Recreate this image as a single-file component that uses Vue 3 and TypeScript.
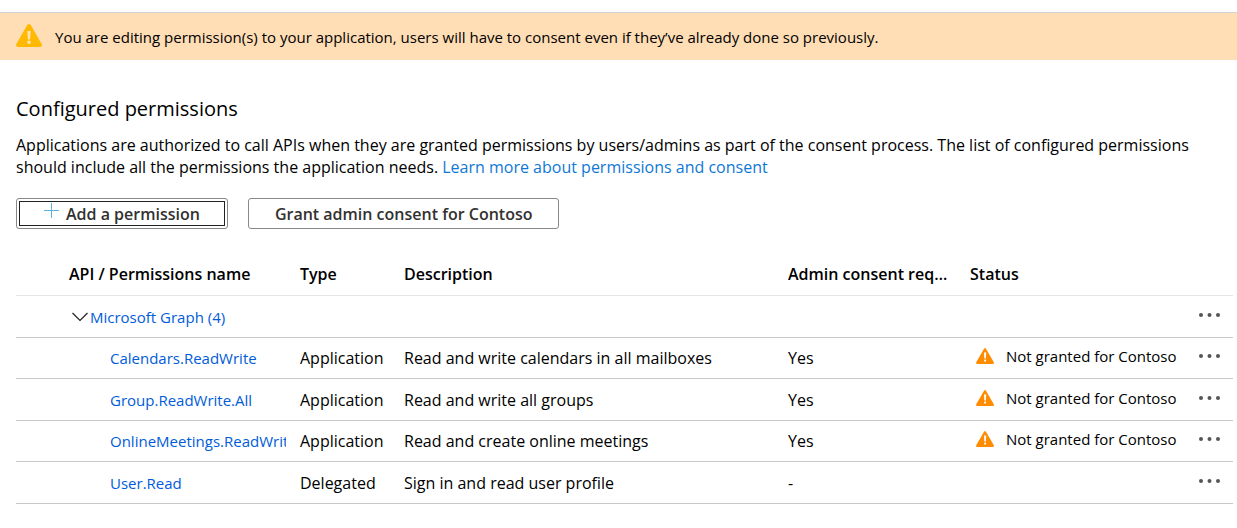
<script setup lang="ts">
interface Permission {
  name: string
  type: 'Application' | 'Delegated'
  description: string
  consent: string
  status?: string
}

const permissions: Permission[] = [
  { name: 'Calendars.ReadWrite', type: 'Application', description: 'Read and write calendars in all mailboxes', consent: 'Yes', status: 'Not granted for Contoso' },
  { name: 'Group.ReadWrite.All', type: 'Application', description: 'Read and write all groups', consent: 'Yes', status: 'Not granted for Contoso' },
  { name: 'OnlineMeetings.ReadWrite.All', type: 'Application', description: 'Read and create online meetings', consent: 'Yes', status: 'Not granted for Contoso' },
  { name: 'User.Read', type: 'Delegated', description: 'Sign in and read user profile', consent: '-' },
]
</script>

<template>
  <main class="page">
    <div class="banner" role="status">
      <svg class="banner-icon" viewBox="0 0 26 23" aria-hidden="true">
        <path d="M11.2 1.100Q13-1 14.800 1.100L25.600 20Q26.600 22.700 23.800 23H2.200Q-.6 22.700.4 20Z" fill="#ffb900" />
        <path d="M11.300 7h3.400l-.6 8.400h-2.200Z" fill="#ffe3b0" />
        <circle cx="13" cy="18.200" r="1.800" fill="#ffe3b0" />
      </svg>
      <span>You are editing permission(s) to your application, users will have to consent even if they’ve already done so previously.</span>
    </div>

    <section class="content">
      <h1>Configured permissions</h1>
      <p>
        Applications are authorized to call APIs when they are granted permissions by users/admins as part of the consent process. The list of configured permissions should include all the permissions the application needs.
        <a href="#">Learn more about permissions and consent</a>
      </p>

      <div class="actions">
        <button type="button" class="button add">
          <svg class="plus" viewBox="0 0 16 16" aria-hidden="true">
            <path d="M7.5 0v15M0 7.5h15" fill="none" stroke="#59b4d9" />
          </svg>
          Add a permission
        </button>
        <button type="button" class="button grant">Grant admin consent for Contoso</button>
      </div>

      <table>
        <colgroup>
          <col class="col-name" />
          <col class="col-type" />
          <col />
          <col class="col-consent" />
          <col class="col-status" />
          <col class="col-menu" />
        </colgroup>
        <thead>
          <tr>
            <th scope="col" class="name-head">API / Permissions name</th>
            <th scope="col">Type</th>
            <th scope="col">Description</th>
            <th scope="col"><div class="ellipsis">Admin consent required</div></th>
            <th scope="col">Status</th>
            <td></td>
          </tr>
        </thead>
        <tbody>
          <tr>
            <td colspan="5">
              <div class="group">
                <button type="button" class="toggle" aria-label="Collapse Microsoft Graph" aria-expanded="true">
                  <svg viewBox="0 0 16 10" aria-hidden="true">
                    <path d="M.5 1 8 8.500 15.500 1" fill="none" stroke="#222" stroke-width="1.200" />
                  </svg>
                </button>
                <a href="#">Microsoft Graph (4)</a>
              </div>
            </td>
            <td class="raised">
              <button type="button" class="more" aria-label="More actions for Microsoft Graph">
                <svg viewBox="0 0 22 4" aria-hidden="true"><circle cx="2" cy="2" r="2" /><circle cx="10.500" cy="2" r="2" /><circle cx="19" cy="2" r="2" /></svg>
              </button>
            </td>
          </tr>
          <tr v-for="p in permissions" :key="p.name">
            <td><div class="permission"><a href="#">{{ p.name }}</a></div></td>
            <td>{{ p.type }}</td>
            <td>{{ p.description }}</td>
            <td>{{ p.consent }}</td>
            <td class="raised">
              <div v-if="p.status" class="status">
                <svg viewBox="0 0 18 16" aria-hidden="true">
                  <path d="M8 .8Q9-.6 10 .8L17.800 14.200Q18.300 15.800 16.800 16H1.200Q-.3 15.800.2 14.200Z" fill="#ff8c00" />
                  <path d="M8 4.500h2.200l-.3 6H8.300Z" fill="#fff" />
                  <circle cx="9.100" cy="12.600" r="1.100" fill="#fff" />
                </svg>
                <span>{{ p.status }}</span>
              </div>
            </td>
            <td class="raised">
              <button type="button" class="more" :aria-label="`More actions for ${p.name}`">
                <svg viewBox="0 0 22 4" aria-hidden="true"><circle cx="2" cy="2" r="2" /><circle cx="10.500" cy="2" r="2" /><circle cx="19" cy="2" r="2" /></svg>
              </button>
            </td>
          </tr>
        </tbody>
      </table>
    </section>
  </main>
</template>

<style>
body {
  margin: 0;
  background: #fff;
}
</style>

<style scoped>
.page {
  padding-top: 12px;
  color: #000;
  font: 16px/22px "Segoe UI", "Open Sans", "Noto Sans", sans-serif;
}

a {
  color: #015cda;
  text-decoration: none;
}

button {
  margin: 0;
  padding: 0;
  border: 0;
  background: none;
  font: inherit;
  color: inherit;
  cursor: pointer;
}

svg {
  display: block;
  flex: none;
}

.banner {
  display: flex;
  align-items: center;
  gap: 13px;
  min-height: 47px;
  padding: 0 16px;
  border-top: 1px solid #d0d4d8;
  background: #ffddb5;
  font-size: 15px;
}

.banner-icon {
  width: 26px;
  height: 23px;
  margin-bottom: 2px;
}

.content {
  padding: 35px 4px 0 16px;
}

h1 {
  margin: 0 0 11px;
  font-size: 20px;
  font-weight: 400;
  line-height: 28px;
}

p {
  margin: 0;
  padding-right: 24px;
}

p a {
  color: #0f78d4;
}

.actions {
  display: flex;
  gap: 20px;
  margin-top: 20px;
}

.button {
  display: flex;
  align-items: center;
  justify-content: center;
  height: 31px;
  border: 1px solid #8a8886;
  border-radius: 3px;
  color: #323130;
  font-weight: 600;
}

.add {
  gap: 6px;
  padding: 0 27px;
  outline: 1px solid #222;
  outline-offset: -4px;
}

.grant {
  padding: 0 26px;
}

.plus {
  width: 16px;
  height: 16px;
  margin-bottom: 5px;
}

table {
  width: 100%;
  margin-top: 24px;
  border-collapse: separate;
  border-spacing: 0;
  table-layout: fixed;
}

.col-name { width: 284px; }
.col-type { width: 104px; }
.col-consent { width: 182px; }
.col-status { width: 212px; }
.col-menu { width: 51px; }

th,
td {
  box-sizing: border-box;
  height: 41px;
  padding: 0;
  border-bottom: 1px solid #c8c8c8;
  text-align: left;
  vertical-align: middle;
  white-space: nowrap;
}

tbody tr:nth-child(odd) td {
  height: 42px;
}

thead th,
thead td {
  height: 43px;
  border-bottom-color: #e6e6e6;
  font-weight: 600;
}

thead .name-head {
  padding-left: 53px;
}

.ellipsis {
  width: 160px;
  overflow: hidden;
  text-overflow: ellipsis;
}

.group {
  display: flex;
  align-items: center;
  gap: 2px;
  padding-left: 56px;
  font-size: 15px;
}

.toggle svg {
  width: 16px;
  height: 10px;
}

.permission {
  margin: 0 14px 0 94px;
  overflow: hidden;
  font-size: 15px;
}

td.raised {
  padding-bottom: 4px;
}

.status {
  display: flex;
  align-items: center;
  gap: 12px;
  padding-left: 6px;
  font-size: 15px;
}

.status svg {
  width: 18px;
  height: 16px;
}

.more {
  display: block;
  margin-left: 17px;
  padding: 8px 0;
}

.more svg {
  width: 22px;
  height: 4px;
  fill: #555;
}
</style>
